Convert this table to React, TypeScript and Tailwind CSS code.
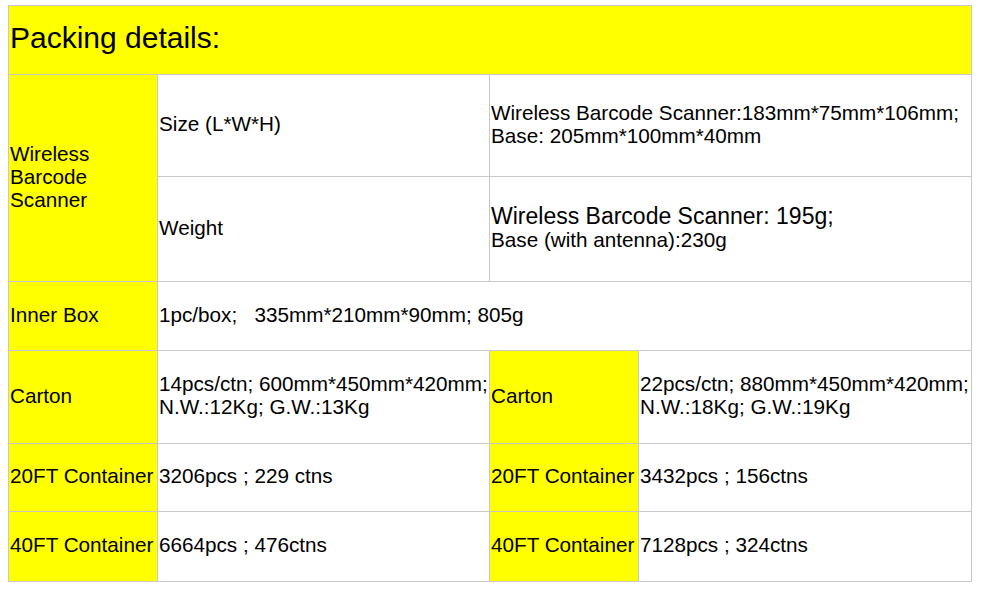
import React from 'react'

const Label = ({ children, className = '' }: { children: React.ReactNode; className?: string }) => (
  <div className={`flex items-center bg-[#ffff00] pb-1 pl-px whitespace-nowrap ${className}`}>{children}</div>
)

const Value = ({ children, className = '' }: { children: React.ReactNode; className?: string }) => (
  <div className={`flex items-center bg-white pb-1 pl-px whitespace-nowrap ${className}`}>
    <div>{children}</div>
  </div>
)

export default function App() {
  return (
    <div className="min-h-[593px] bg-white pt-[5px] pl-2 font-['Liberation_Sans',Arial,sans-serif] text-[20.7px] leading-[23px] text-black">
      <div className="grid w-[964px] grid-cols-[148px_331px_148px_332px] grid-rows-[68px_101px_104px_68px_92px_67px_69px] gap-px bg-[#c8c8c8] p-px">
        <Label className="col-span-4 text-[30px] leading-[34px]">Packing details:</Label>

        <Label className="row-span-2">
          <div>
            Wireless
            <br />
            Barcode
            <br />
            Scanner
          </div>
        </Label>
        <Value>Size (L*W*H)</Value>
        <Value className="col-span-2">
          Wireless Barcode Scanner:183mm*75mm*106mm;
          <br />
          Base: 205mm*100mm*40mm
        </Value>

        <Value>Weight</Value>
        <Value className="col-span-2">
          <span className="text-[23px] leading-[24px]">Wireless Barcode Scanner: 195g;</span>
          <br />
          Base (with antenna):230g
        </Value>

        <Label>Inner Box</Label>
        <Value className="col-span-3 whitespace-pre">1pc/box;   335mm*210mm*90mm; 805g</Value>

        <Label>Carton</Label>
        <Value>
          14pcs/ctn; 600mm*450mm*420mm;
          <br />
          N.W.:12Kg; G.W.:13Kg
        </Value>
        <Label>Carton</Label>
        <Value>
          22pcs/ctn; 880mm*450mm*420mm;
          <br />
          N.W.:18Kg; G.W.:19Kg
        </Value>

        <Label>20FT Container</Label>
        <Value>3206pcs ; 229 ctns</Value>
        <Label>20FT Container</Label>
        <Value>3432pcs ; 156ctns</Value>

        <Label>40FT Container</Label>
        <Value>6664pcs ; 476ctns</Value>
        <Label>40FT Container</Label>
        <Value>7128pcs ; 324ctns</Value>
      </div>
    </div>
  )
}
